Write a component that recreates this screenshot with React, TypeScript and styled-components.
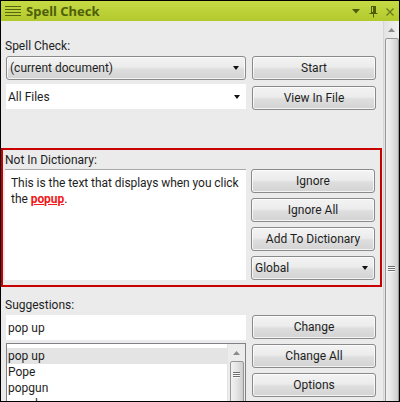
import styled, { createGlobalStyle } from 'styled-components';

const GlobalStyle = createGlobalStyle`
  html, body {
    margin: 0;
    padding: 0;
    background: #ebebeb;
  }
  body {
    font-family: Roboto, 'Noto Sans', sans-serif;
    font-size: 12px;
    color: #1e1e1e;
  }
`;

const suggestions = ['pop up', 'Pope', 'popgun', 'popular'];

const TitleIcons = () => (
  <St.TitleIcons width="46" height="20" viewBox="0 0 46 20">
    {/* dropdown */}
    <path d="M2 8h8l-4 4.5z" fill="#4d5c06" />
    {/* pin */}
    <rect x="21.5" y="5.5" width="4" height="6" fill="none" stroke="#4d5c06" />
    <rect x="23" y="6" width="2" height="5.5" fill="#4d5c06" />
    <path d="M19.5 12.5h8M23.5 12.5v4" stroke="#4d5c06" strokeWidth="1" />
    {/* close */}
    <path d="M36.5 7.5l7 7M43.5 7.5l-7 7" stroke="#6d7c1c" strokeWidth="1.4" />
  </St.TitleIcons>
);

const Hamburger = () => (
  <svg width="16" height="20" viewBox="0 0 16 20">
    {[5, 8, 11, 14].map((y) => (
      <rect key={y} x="0" y={y} width="16" height="1" fill="#56660e" />
    ))}
  </svg>
);

const Grip = () => (
  <St.Grip>
    <span />
    <span />
    <span />
  </St.Grip>
);

const UpArrow = () => (
  <St.ArrowUp width="7" height="4" viewBox="0 0 7 4">
    <path d="M0 4h7L3.5 0z" fill="#8a8a8a" />
  </St.ArrowUp>
);

const App = () => {
  return (
    <>
      <GlobalStyle />
      <St.Window>
        <St.TitleBar>
          <Hamburger />
          <St.Title>Spell Check</St.Title>
          <TitleIcons />
        </St.TitleBar>
        <St.Body>
          <St.Content>
            <St.Section $top={17}>
              <St.Label>Spell Check:</St.Label>
              <St.Row>
                <St.Combo>
                  (current document)
                  <St.DropArrow />
                </St.Combo>
                <St.Button>Start</St.Button>
              </St.Row>
              <St.Row>
                <St.EditCombo>
                  All Files
                  <St.DropArrow />
                </St.EditCombo>
                <St.Button>View In File</St.Button>
              </St.Row>
            </St.Section>

            <St.Highlight>
              <St.Label>Not In Dictionary:</St.Label>
              <St.PanelRow>
                <St.TextBox>
                  This is the text that displays when you click the <St.Misspelled>popup</St.Misspelled>.
                </St.TextBox>
                <St.ButtonColumn>
                  <St.Button>Ignore</St.Button>
                  <St.Button>Ignore All</St.Button>
                  <St.Button>Add To Dictionary</St.Button>
                  <St.Combo>
                    Global
                    <St.DropArrow />
                  </St.Combo>
                </St.ButtonColumn>
              </St.PanelRow>
            </St.Highlight>

            <St.Section $top={10}>
              <St.Label>Suggestions:</St.Label>
              <St.Row>
                <St.Input>pop up</St.Input>
                <St.Button>Change</St.Button>
              </St.Row>
              <St.ListRow>
                <St.ListBox>
                  <St.ListItems>
                    {suggestions.map((word, i) => (
                      <St.ListItem key={word} $selected={i === 0}>
                        {word}
                      </St.ListItem>
                    ))}
                  </St.ListItems>
                  <St.ListScroll>
                    <UpArrow />
                    <St.ListThumb>
                      <Grip />
                    </St.ListThumb>
                  </St.ListScroll>
                </St.ListBox>
                <St.ButtonColumn $offset={1}>
                  <St.Button>Change All</St.Button>
                  <St.Button>Options</St.Button>
                </St.ButtonColumn>
              </St.ListRow>
            </St.Section>
          </St.Content>

          <St.ScrollBar>
            <UpArrow />
            <St.Thumb>
              <Grip />
            </St.Thumb>
          </St.ScrollBar>
        </St.Body>
      </St.Window>
    </>
  );
};

export default App;

const buttonFace = `
  box-sizing: border-box;
  height: 24px;
  border: 1px solid #8a8a8a;
  border-radius: 3px;
  background: linear-gradient(#f3f3f3 0%, #ececec 45%, #dedede 55%, #d3d3d3 100%);
  box-shadow: inset 0 0 0 1px rgba(255, 255, 255, 0.75);
  font-family: Roboto, 'Noto Sans', sans-serif;
  font-size: 12px;
  color: #1e1e1e;
`;

const St = {
  Window: styled.div`
    box-sizing: border-box;
    width: 400px;
    height: 402px;
    border: 1px solid #000;
    display: flex;
    flex-direction: column;
    background: #ebebeb;
    overflow: hidden;
  `,
  TitleBar: styled.div`
    height: 20px;
    flex: none;
    display: flex;
    align-items: center;
    padding-left: 4px;
    background: linear-gradient(#c6da45, #b2c92c);
  `,
  Title: styled.div`
    margin-left: 5px;
    flex: 1;
    font-family: 'Noto Sans', sans-serif;
    font-weight: bold;
    font-size: 13px;
    color: #4f5f08;
  `,
  TitleIcons: styled.svg`
    display: block;
    margin-right: 3px;
  `,
  Body: styled.div`
    flex: 1;
    display: flex;
    min-height: 0;
    overflow: hidden;
  `,
  Content: styled.div`
    width: 382px;
    flex: none;
    display: flex;
    flex-direction: column;
  `,
  Section: styled.div<{ $top: number }>`
    margin-top: ${({ $top }) => $top}px;
    padding: 0 7px 0 5px;
    display: flex;
    flex-direction: column;
    gap: 6px;
    & > :first-child {
      margin-bottom: -4px;
    }
  `,
  Label: styled.div`
    margin-left: -1px;
    height: 16px;
    line-height: 16px;
  `,
  Row: styled.div`
    display: grid;
    grid-template-columns: 240px 124px;
    column-gap: 6px;
    height: 24px;
  `,
  Combo: styled.div`
    ${buttonFace};
    display: flex;
    align-items: center;
    justify-content: space-between;
    padding: 0 6px 0 3px;
  `,
  EditCombo: styled.div`
    box-sizing: border-box;
    display: flex;
    align-items: center;
    justify-content: space-between;
    padding: 0 6px 0 2px;
    background: #fff;
    margin-top: -2px;
    height: 25px;
  `,
  DropArrow: styled.span`
    width: 0;
    height: 0;
    border-left: 3.5px solid transparent;
    border-right: 3.5px solid transparent;
    border-top: 4px solid #111;
  `,
  Button: styled.div`
    ${buttonFace};
    display: flex;
    align-items: center;
    justify-content: center;
  `,
  Highlight: styled.div`
    margin: 38px 1px 0 0;
    border: 2px solid #c80000;
    padding: 2px 4px 5px 3px;
    display: flex;
    flex-direction: column;
    gap: 1px;
  `,
  PanelRow: styled.div`
    display: grid;
    grid-template-columns: 241px 124px;
    column-gap: 5px;
    margin-left: -1px;
  `,
  TextBox: styled.div`
    box-sizing: border-box;
    height: 111px;
    background: #fff;
    border-top: 1px solid #a8a8a8;
    padding: 5px 0 5px 6px;
    line-height: 16px;
    font-size: 12px;
    letter-spacing: -0.05px;
  `,
  Misspelled: styled.span`
    color: #f21818;
    font-weight: bold;
    text-decoration: underline;
  `,
  ButtonColumn: styled.div<{ $offset?: number }>`
    display: flex;
    flex-direction: column;
    gap: 5px;
    margin-top: ${({ $offset = 0 }) => $offset}px;
  `,
  Input: styled.div`
    box-sizing: border-box;
    background: #fff;
    display: flex;
    align-items: center;
    padding-left: 2px;
    height: 25px;
  `,
  ListRow: styled.div`
    display: grid;
    grid-template-columns: 240px 124px;
    column-gap: 6px;
    margin-top: -2px;
  `,
  ListBox: styled.div`
    box-sizing: border-box;
    height: 80px;
    border: 1px solid #7f8388;
    border-bottom: none;
    background: #fff;
    display: flex;
  `,
  ListItems: styled.div`
    flex: 1;
    padding-top: 4px;
  `,
  ListItem: styled.div<{ $selected?: boolean }>`
    height: 16px;
    line-height: 16px;
    padding-left: 1px;
    background: ${({ $selected }) => ($selected ? '#e4e4e4' : 'transparent')};
  `,
  ListScroll: styled.div`
    width: 17px;
    background: #ececec;
    border-left: 1px solid #e4e4e4;
    display: flex;
    flex-direction: column;
    align-items: center;
  `,
  ArrowUp: styled.svg`
    display: block;
    margin: 7px 0 6px;
    flex: none;
  `,
  ListThumb: styled.div`
    box-sizing: border-box;
    width: 14px;
    height: 60px;
    border: 1px solid #979797;
    border-radius: 2px;
    background: linear-gradient(90deg, #f2f2f2, #e4e4e4 50%, #cdcdcd);
    display: flex;
    align-items: flex-start;
    justify-content: center;
    padding-top: 10px;
  `,
  ScrollBar: styled.div`
    flex: 1;
    border-left: 1px solid #d6d6d6;
    background: linear-gradient(90deg, #e3e3e3, #f0f0f0);
    display: flex;
    flex-direction: column;
    align-items: center;
  `,
  Thumb: styled.div`
    box-sizing: border-box;
    flex: none;
    width: 14px;
    height: 460px;
    border: 1px solid #979797;
    border-radius: 2px;
    background: linear-gradient(90deg, #f2f2f2, #e4e4e4 50%, #cdcdcd);
    display: flex;
    align-items: center;
    justify-content: center;
  `,
  Grip: styled.div`
    display: flex;
    flex-direction: column;
    gap: 1px;
    & > span {
      display: block;
      width: 7px;
      height: 1px;
      background: #6e6e6e;
      box-shadow: 0 1px 0 #fafafa;
    }
  `,
};
